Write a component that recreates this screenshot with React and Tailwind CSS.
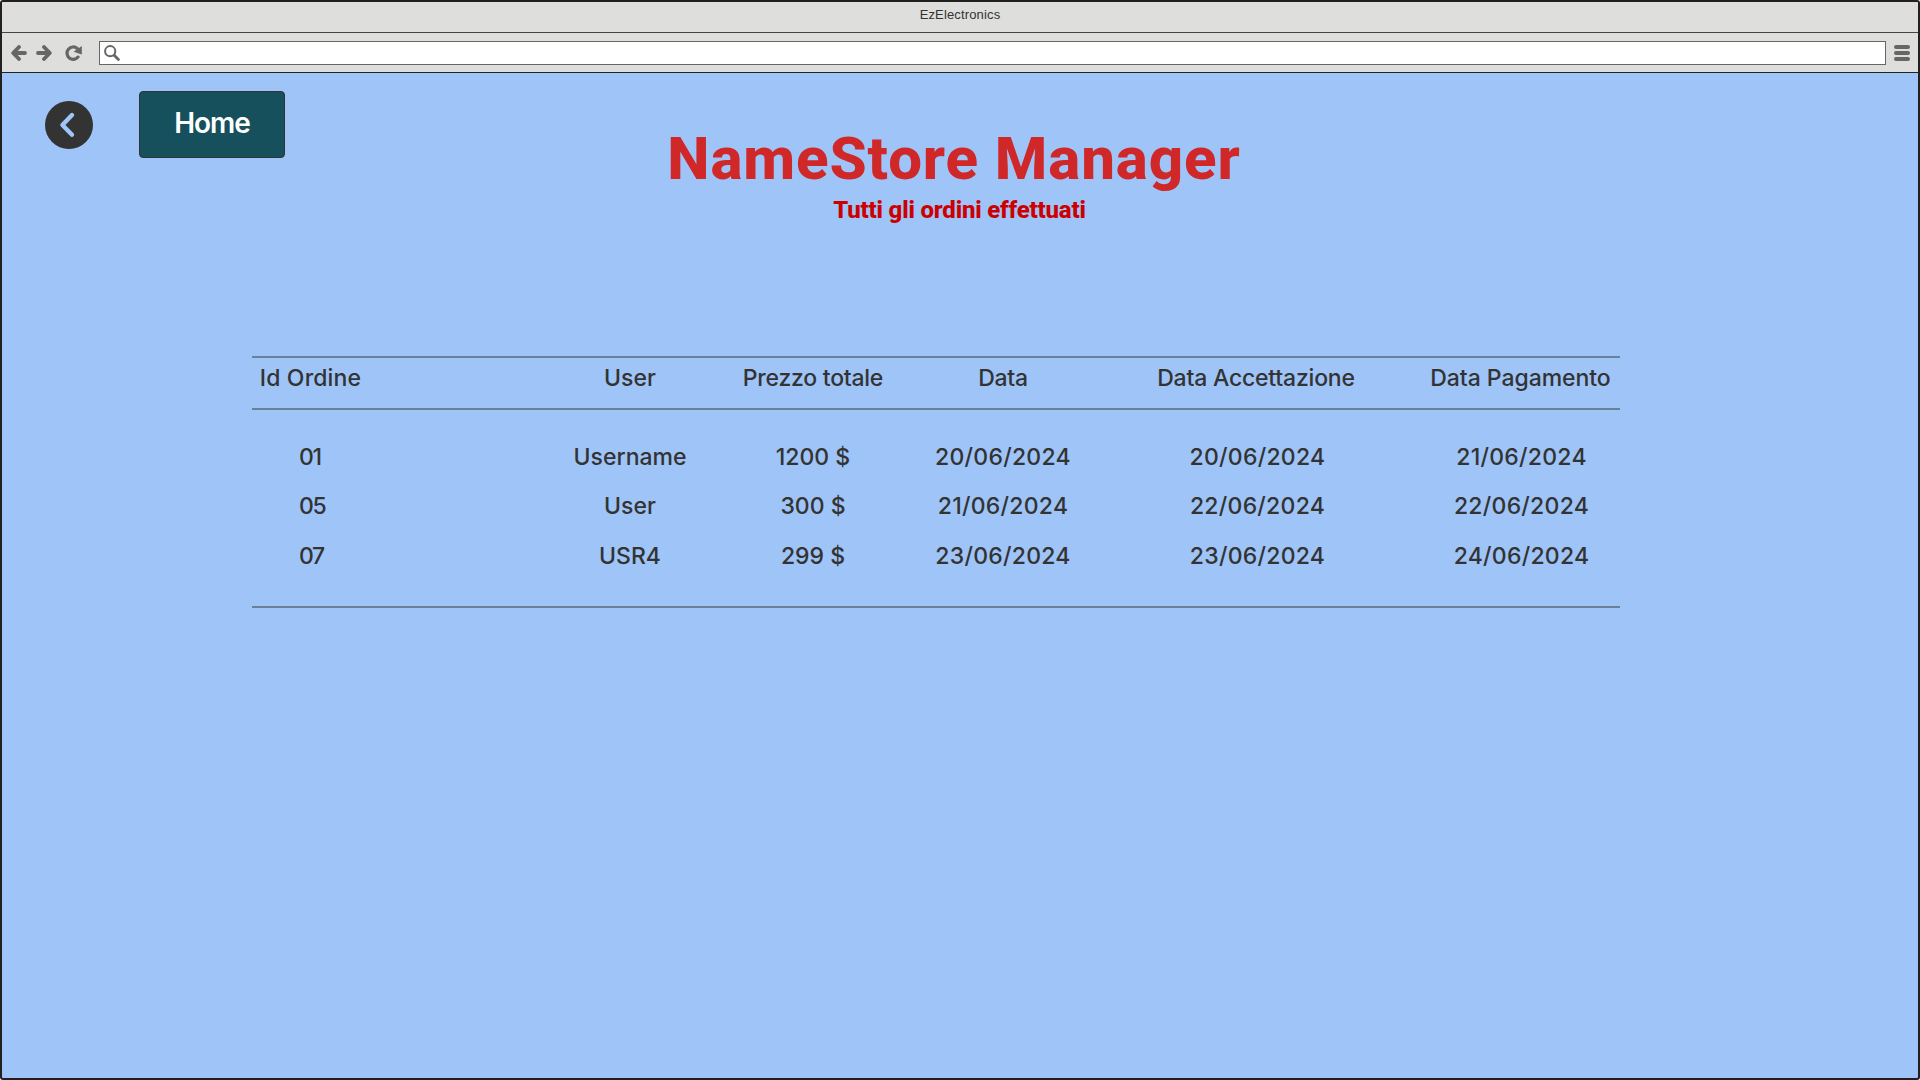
const columns = [
  {
    title: "Id Ordine",
    width: "w-[117px] text-center",
    head: "tracking-[0.15px]",
    cells: ["01", "05", "07"],
    body: "pl-[47px] text-left tracking-[-1.4px]",
  },
  {
    title: "User",
    width: "ml-[171px] w-[180px] text-center",
    head: "",
    cells: ["Username", "User", "USR4"],
    body: "",
  },
  {
    title: "Prezzo totale",
    width: "ml-[13px] w-[160px] text-center",
    head: "tracking-[-0.25px]",
    cells: ["1200 $", "300 $", "299 $"],
    body: "",
  },
  {
    title: "Data",
    width: "ml-[28px] w-[164px] text-center",
    head: "tracking-[-0.3px]",
    cells: ["20/06/2024", "21/06/2024", "23/06/2024"],
    body: "tracking-[0.25px]",
  },
  {
    title: "Data Accettazione",
    width: "ml-[59px] w-[224px] text-center",
    head: "tracking-[-0.2px]",
    cells: ["20/06/2024", "22/06/2024", "23/06/2024"],
    body: "pl-[3px] tracking-[0.25px]",
  },
  {
    title: "Data Pagamento",
    width: "ml-[59px] w-[187px] text-center",
    head: "tracking-[-0.05px]",
    cells: ["21/06/2024", "22/06/2024", "24/06/2024"],
    body: "pl-0.5 tracking-[0.25px]",
  },
];

function ArrowIcon({ className = "" }) {
  return (
    <svg viewBox="0 0 16 16" className={`size-4 ${className}`} fill="none" stroke="#666" strokeWidth="3.8" strokeLinecap="round" strokeLinejoin="round">
      <path d="M14 8H3M8 2L2.2 8L8 14" />
    </svg>
  );
}

function ReloadIcon() {
  return (
    <svg viewBox="0 0 17 16" className="h-4 w-[17px]" fill="none">
      <path d="M13 12.1A6.2 6.2 0 1 1 12.2 3.4" stroke="#666" strokeWidth="3.2" strokeLinecap="round" />
      <path d="M16.8 1V9.6L8.6 6.8Z" fill="#666" />
    </svg>
  );
}

function SearchIcon() {
  return (
    <svg viewBox="0 0 16 16" className="size-4" fill="none" stroke="#666" strokeLinecap="round">
      <circle cx="6.2" cy="6.2" r="5.1" strokeWidth="2" />
      <path d="M10.4 10.4L14.4 14.4" strokeWidth="2.8" />
    </svg>
  );
}

function Toolbar() {
  return (
    <div className="flex h-10 shrink-0 items-center border-b border-[#222] bg-[#dededc] pl-[9px] pr-2">
      <ArrowIcon />
      <ArrowIcon className="ml-[9px] rotate-180" />
      <div className="ml-[13px]">
        <ReloadIcon />
      </div>
      <div className="ml-[17px] flex h-6 flex-1 items-center border border-[#666] bg-white pl-1">
        <SearchIcon />
      </div>
      <div className="ml-2 flex w-4 flex-col gap-0.5">
        <span className="h-1 rounded-full bg-[#666]" />
        <span className="h-1 rounded-full bg-[#666]" />
        <span className="h-1 rounded-full bg-[#666]" />
      </div>
    </div>
  );
}

function OrdersTable() {
  return (
    <div className="ml-[250px] flex h-[252px] w-[1368px] flex-col whitespace-nowrap border-y-2 border-[#697f9a] text-[23px] font-medium leading-7">
      <div className="flex h-[52px] shrink-0 border-b-2 border-[#697f9a] pt-1.5">
        {columns.map((c) => (
          <div key={c.title} className={`${c.width} ${c.head}`}>
            {c.title}
          </div>
        ))}
      </div>
      <div className="flex flex-col pt-[11.5px]">
        {[0, 1, 2].map((row) => (
          <div key={row} className="flex h-[49.4px] items-end">
            {columns.map((c) => (
              <div key={c.title} className={c.width}>
                <div className={c.body}>{c.cells[row]}</div>
              </div>
            ))}
          </div>
        ))}
      </div>
    </div>
  );
}

export default function App() {
  return (
    <div className="flex h-[1080px] w-[1920px] flex-col overflow-hidden rounded-[3px] border-2 border-[#231f20] bg-[#9fc4f8] font-['Inter',sans-serif] text-[#333]">
      <div className="flex h-[31px] shrink-0 justify-center border-b border-[#444] bg-[#dededc] pt-[5px] font-['Liberation_Sans',sans-serif] text-[13px] leading-4 tracking-[0.15px]">
        EzElectronics
      </div>
      <Toolbar />

      <main className="flex flex-1 flex-col">
        <div className="flex h-[283px] shrink-0">
          <button className="ml-[43px] mt-7 flex size-12 items-center justify-center rounded-full bg-[#333]">
            <svg viewBox="0 0 48 48" className="size-12" fill="none" stroke="#9fc4f8" strokeWidth="4.4" strokeLinecap="round" strokeLinejoin="round">
              <path d="M27 14L17.4 24L27 33.8" />
            </svg>
          </button>
          <button className="ml-[46px] mt-[18px] flex h-[67px] w-[146px] items-center justify-center rounded border border-[#333] bg-[#16505c] pb-1 text-[28px] font-semibold tracking-[-1px] text-white">
            Home
          </button>
          <div className="ml-[269px] flex w-[800px] flex-col items-center whitespace-nowrap pt-[50px] font-['Roboto',sans-serif] font-extrabold">
            <h1 className="text-[60px] leading-[72px] tracking-[0.9px] text-[#d02828]">NameStore Manager</h1>
            <h2 className="ml-[11px] mt-px text-[24px] leading-7 tracking-[-0.2px] text-[#cc0000]">Tutti gli ordini effettuati</h2>
          </div>
        </div>
        <OrdersTable />
      </main>
    </div>
  );
}
